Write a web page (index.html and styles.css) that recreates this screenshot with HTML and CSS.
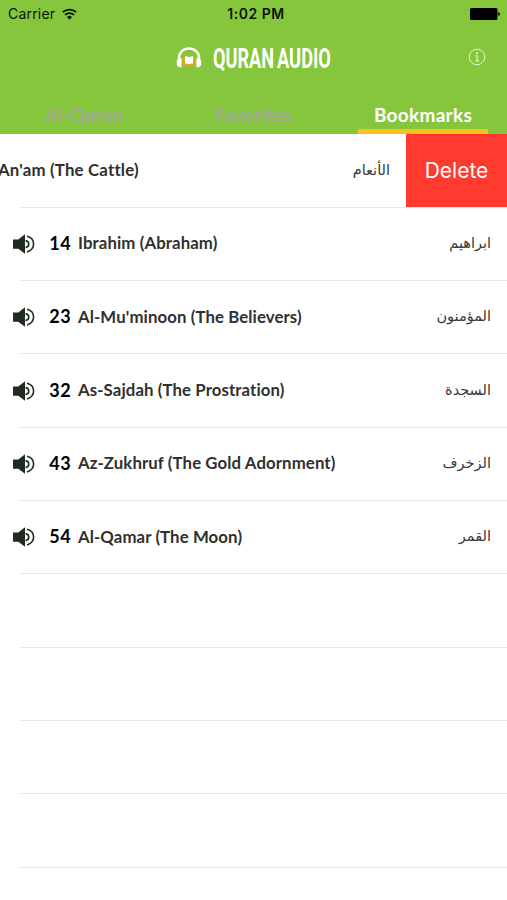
FILE: index.html
```html
<!DOCTYPE html>
<html lang="en">
  <head>
    <meta charset="utf-8">
    <title>Quran Audio</title>
    <link rel="stylesheet" href="styles.css">
  </head>
  <body>

    <svg class="sprite" width="0" height="0">
      <symbol id="speaker" viewBox="0 0 22 20">
        <path d="M0 5.5h5.3L12 .2v19.6l-6.7-5.1H0z" fill="#202b22"/>
        <path d="M12.6 6.6q3.2.5 3.2 3.5t-3.2 3.5M14 2.3q6.6 1.8 6.6 7.8T14 17.9" fill="none" stroke="#202b22" stroke-width="1.6"/>
      </symbol>
    </svg>

    <div class="header">
      <div class="status-bar">
        <div class="carrier">
          <span class="carrier-name">Carrier</span>
          <svg width="15" height="12" viewBox="0 0 15 12">
            <path d="M.8 4.2a9.8 9.8 0 0 1 13.4 0M3.1 6.8a6.4 6.4 0 0 1 8.8 0" fill="none" stroke="#0b1404" stroke-width="1.8"/>
            <path d="M5 9a3.7 3.7 0 0 1 5 0l-2.5 2.7z" fill="#0b1404"/>
          </svg>
        </div>
        <div class="time">1:02 PM</div>
        <svg class="battery" width="31" height="12" viewBox="0 0 31 12">
          <rect width="27.5" height="12" rx="1.5"/>
          <path d="M28.3 4q1.7.4 1.7 2t-1.7 2z"/>
        </svg>
      </div>

      <div class="title-bar">
        <div class="logo">
          <svg width="26" height="21" viewBox="0 0 26 21">
            <path d="M6 10h14v8.8H6z" fill="#d9a62b"/>
            <path d="M9 9.3q2.3-.2 4 1.2 1.7-1.4 4-1.2v7.2q-2.3-.2-4 .8-1.7-1-4-.8z" fill="#fff"/>
            <path d="M3 13v-2a10 9.6 0 0 1 20 0v2" fill="none" stroke="#fff" stroke-width="2.5"/>
            <path d="M5.6 11.3v9H3.8Q.6 19.8.6 15.8t3.2-4.5zM20.4 11.3v9h1.8q3.2-.5 3.2-4.5t-3.2-4.5z" fill="#fff"/>
          </svg>
          <svg class="logo-name" width="118" height="30" viewBox="0 0 118 30">
            <text transform="translate(0 25.5) scale(.55 1)" textLength="111" lengthAdjust="spacingAndGlyphs">QURAN</text>
            <text transform="translate(64 25.5) scale(.55 1)" textLength="98" lengthAdjust="spacingAndGlyphs">AUDIO</text>
          </svg>
        </div>
        <svg class="info" width="18" height="18" viewBox="0 0 18 18">
          <circle cx="9" cy="9" r="7.8" fill="none" stroke="#e6f5d2"/>
          <circle cx="9" cy="5.1" r="1" fill="#e6f5d2"/>
          <path d="M7.5 7.7h1.7v5M7.2 12.9h3.8" fill="none" stroke="#e6f5d2" stroke-width="1.1"/>
        </svg>
      </div>

      <div class="tabs">
        <div class="tab">Al-Quran</div>
        <div class="tab">Favorites</div>
        <div class="tab active">Bookmarks</div>
      </div>
    </div>

    <div class="list">
      <div class="row swiped">
        <div class="name">An'am (The Cattle)</div>
        <div class="arabic" lang="ar" dir="rtl">الأنعام</div>
        <div class="delete">Delete</div>
      </div>
      <div class="row">
        <svg class="speaker"><use href="#speaker"/></svg>
        <div class="number">14</div>
        <div class="name">Ibrahim (Abraham)</div>
        <div class="arabic" lang="ar" dir="rtl">ابراهيم</div>
      </div>
      <div class="row">
        <svg class="speaker"><use href="#speaker"/></svg>
        <div class="number">23</div>
        <div class="name">Al-Mu'minoon (The Believers)</div>
        <div class="arabic" lang="ar" dir="rtl">المؤمنون</div>
      </div>
      <div class="row">
        <svg class="speaker"><use href="#speaker"/></svg>
        <div class="number">32</div>
        <div class="name">As-Sajdah (The Prostration)</div>
        <div class="arabic" lang="ar" dir="rtl">السجدة</div>
      </div>
      <div class="row">
        <svg class="speaker"><use href="#speaker"/></svg>
        <div class="number">43</div>
        <div class="name">Az-Zukhruf (The Gold Adornment)</div>
        <div class="arabic" lang="ar" dir="rtl">الزخرف</div>
      </div>
      <div class="row">
        <svg class="speaker"><use href="#speaker"/></svg>
        <div class="number">54</div>
        <div class="name">Al-Qamar (The Moon)</div>
        <div class="arabic" lang="ar" dir="rtl">القمر</div>
      </div>
      <div class="row"></div>
      <div class="row"></div>
      <div class="row"></div>
      <div class="row"></div>
      <div class="row"></div>
    </div>

  </body>
</html>
```
FILE: styles.css
```css
body {
  margin: 0;
  height: 900px;
  overflow: hidden;
  background-color: #FFFFFF;
  font-family: Lato, "Noto Sans", sans-serif;
  font-variant-ligatures: none;
}

.sprite {
  display: block;
}

.header {
  height: 134px;
  background-color: #86C63C;
}

.status-bar {
  display: grid;
  grid-template-columns: 1fr auto 1fr;
  align-items: center;
  height: 27px;
  padding: 0 6px 0 8px;
  font-family: Inter, sans-serif;
  font-size: 14px;
  color: #0B1404;
}

.carrier {
  display: flex;
  align-items: center;
  gap: 7px;
}

.carrier-name {
  letter-spacing: 0.2px;
}

.time {
  padding-left: 3px;
  font-weight: 600;
  letter-spacing: 0.5px;
}

.battery {
  justify-self: end;
}

.title-bar {
  display: grid;
  grid-template-columns: 1fr auto 1fr;
  align-items: center;
  height: 60px;
  padding: 0 21px;
}

.logo {
  grid-column: 2;
  display: flex;
  align-items: center;
  gap: 11px;
}

.logo-name {
  overflow: visible;
  font-family: Roboto, sans-serif;
  font-size: 28px;
  font-weight: 700;
  fill: #FFFFFF;
}

.info {
  justify-self: end;
}

.tabs {
  display: flex;
  height: 47px;
}

.tab {
  flex: 1;
  box-sizing: border-box;
  padding-top: 16px;
  text-align: center;
  font-size: 19px;
  font-weight: 700;
  line-height: 24px;
  color: #A0A993;
}

.tab.active {
  margin: 0 19px 0 20px;
  flex: 0 0 130px;
  border-bottom: 5px solid #FCC21B;
  letter-spacing: 0.3px;
  color: #FFFFFF;
}

.row {
  position: relative;
  display: flex;
  align-items: center;
  box-sizing: border-box;
  height: 73.34px;
  padding: 0 16px 0 13px;
}

.row::after {
  content: "";
  position: absolute;
  left: 20px;
  right: 0;
  bottom: -0.5px;
  height: 1px;
  background-color: #E8E8E8;
}

.speaker {
  width: 22px;
  height: 20px;
}

.number {
  width: 43px;
  box-sizing: border-box;
  padding: 0 7px 2px 0;
  text-align: right;
  font-size: 18px;
  font-weight: 700;
  letter-spacing: 0.4px;
  color: #000000;
}

.name {
  padding-bottom: 2px;
  font-size: 16.8px;
  font-weight: 700;
  letter-spacing: 0.1px;
  color: #303030;
  white-space: nowrap;
}

.arabic {
  margin-left: auto;
  padding-bottom: 2px;
  font-family: "DejaVu Sans", sans-serif;
  font-size: 14.5px;
  color: #383838;
}

.swiped {
  padding: 0;
}

.swiped .name {
  margin-left: -2px;
  letter-spacing: 0.2px;
}

.delete {
  z-index: 1;
  align-self: stretch;
  display: flex;
  align-items: center;
  justify-content: center;
  width: 101px;
  margin-left: 16px;
  background-color: #FF3B30;
  font-family: Inter, sans-serif;
  font-size: 21px;
  color: #FFFFFF;
}
```
